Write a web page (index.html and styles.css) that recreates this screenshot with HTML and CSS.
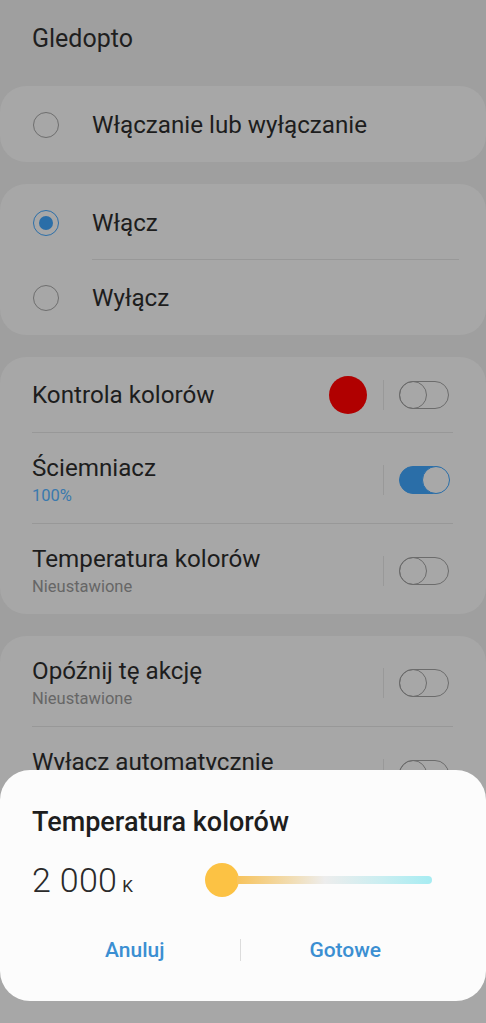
FILE: index.html
```html
<!DOCTYPE html>
<html lang="pl">
<head>
<meta charset="utf-8">
<title>Gledopto</title>
<link rel="stylesheet" href="styles.css">
</head>
<body>
<div class="screen">
  <header class="header">Gledopto</header>

  <section class="card card-single">
    <div class="radio-row">
      <span class="radio"></span>
      <span class="label">Włączanie lub wyłączanie</span>
    </div>
  </section>

  <section class="card card-radios">
    <div class="radio-row">
      <span class="radio radio-on"></span>
      <span class="label">Włącz</span>
    </div>
    <div class="divider divider-indent"></div>
    <div class="radio-row">
      <span class="radio"></span>
      <span class="label">Wyłącz</span>
    </div>
  </section>

  <section class="card card-list">
    <div class="row row-single">
      <div class="texts"><div class="title">Kontrola kolorów</div></div>
      <span class="swatch"></span>
      <span class="sep"></span>
      <span class="toggle"></span>
    </div>
    <div class="divider"></div>
    <div class="row row-double">
      <div class="texts"><div class="title">Ściemniacz</div><div class="sub sub-blue">100%</div></div>
      <span class="sep"></span>
      <span class="toggle toggle-on"></span>
    </div>
    <div class="divider"></div>
    <div class="row row-double">
      <div class="texts"><div class="title">Temperatura kolorów</div><div class="sub">Nieustawione</div></div>
      <span class="sep"></span>
      <span class="toggle"></span>
    </div>
  </section>

  <section class="card card-list card-last">
    <div class="row row-double">
      <div class="texts"><div class="title">Opóźnij tę akcję</div><div class="sub">Nieustawione</div></div>
      <span class="sep"></span>
      <span class="toggle"></span>
    </div>
    <div class="divider"></div>
    <div class="row row-double">
      <div class="texts"><div class="title">Wyłącz automatycznie</div><div class="sub">Nieustawione</div></div>
      <span class="sep"></span>
      <span class="toggle"></span>
    </div>
  </section>

  <div class="dialog">
    <div class="dialog-title">Temperatura kolorów</div>
    <div class="value-row">
      <div class="value"><span class="num">2 000</span><span class="unit">K</span></div>
      <div class="slider">
        <span class="thumb"></span>
        <span class="track"></span>
      </div>
    </div>
    <div class="buttons">
      <button class="btn">Anuluj</button>
      <span class="btn-sep"></span>
      <button class="btn">Gotowe</button>
    </div>
  </div>
</div>
</body>
</html>
```

FILE: styles.css
```css
html, body {
  margin: 0;
  padding: 0;
}
body {
  background: #9f9f9f;
  font-family: Roboto, "Noto Sans", "Liberation Sans", sans-serif;
  color: #1d1d1d;
}
.screen {
  position: relative;
  width: 486px;
  height: 1023px;
  overflow: hidden;
}
.header {
  height: 86px;
  box-sizing: border-box;
  padding: 24px 0 0 32px;
  font-size: 25px;
  line-height: 30px;
  color: #1f1f1f;
}
.card {
  background: #a7a7a7;
  border-radius: 26px;
  margin-bottom: 22px;
}
.card-single {
  height: 76px;
  display: flex;
  flex-direction: column;
  justify-content: center;
}
.card-single .radio-row {
  height: 76px;
  margin-top: 2px;
}
.card-radios {
  padding-top: 3px;
}
.radio-row {
  display: flex;
  align-items: center;
  height: 75px;
  padding-left: 33px;
}
.card-radios .radio-row:first-child {
  height: 72px;
}
.radio {
  width: 26px;
  height: 26px;
  box-sizing: border-box;
  border: 1.5px solid #6e6e6e;
  border-radius: 50%;
  margin-right: 33px;
  flex: none;
  display: flex;
  align-items: center;
  justify-content: center;
}
.radio-on {
  border-color: #2c6fa9;
}
.radio-on::after {
  content: "";
  width: 14px;
  height: 14px;
  border-radius: 50%;
  background: #2a6ea8;
}
.label {
  font-size: 24.2px;
  line-height: 30px;
}
.divider {
  height: 1px;
  background: #989898;
  margin: 0 33px 0 32px;
}
.divider-indent {
  margin: 0 27px 0 92px;
}
.card-list .divider {
  margin: 0 33px 0 32px;
}
.card-last {
  height: 500px;
}
.row {
  display: flex;
  align-items: center;
  padding: 0 37px 0 32px;
  box-sizing: border-box;
}
.row-single {
  height: 75px;
  padding-top: 1px;
}
.row-double {
  height: 90px;
  padding-top: 4px;
}
.texts {
  flex: 1;
}
.title {
  font-size: 24.2px;
  line-height: 30px;
}
.sub {
  font-size: 16.5px;
  line-height: 22px;
  margin-top: 2px;
  color: #666666;
}
.sub-blue {
  color: #3a79ad;
}
.swatch {
  width: 38px;
  height: 38px;
  border-radius: 50%;
  background: #b00000;
  margin-right: 16px;
  flex: none;
}
.sep {
  width: 1px;
  height: 30px;
  background: #999999;
  margin-right: 15px;
  flex: none;
}
.toggle {
  position: relative;
  width: 50px;
  height: 28px;
  box-sizing: border-box;
  border: 1.5px solid #6c6c6c;
  border-radius: 14px;
  flex: none;
}
.toggle::after {
  content: "";
  position: absolute;
  left: -1.5px;
  top: -1.5px;
  width: 28px;
  height: 28px;
  box-sizing: border-box;
  border: 1.5px solid #6c6c6c;
  border-radius: 50%;
}
.toggle-on {
  background: #2a6ea8;
  border-color: #2a6ea8;
}
.toggle-on::after {
  left: auto;
  right: -1.5px;
  border-color: #2a6ea8;
  background: #a8a8a8;
}
.dialog {
  position: absolute;
  left: 0;
  right: 0;
  top: 770px;
  height: 231px;
  box-sizing: border-box;
  background: #fcfcfc;
  border-radius: 30px;
  padding: 37px 33px 0 32px;
}
.dialog-title {
  font-size: 27px;
  line-height: 30px;
  font-weight: 500;
  color: #1e1e1e;
}
.value-row {
  display: flex;
  align-items: center;
  height: 44px;
  margin-top: 21px;
}
.value {
  width: 173px;
  display: flex;
  align-items: baseline;
  color: #2a2a2a;
}
.num {
  font-size: 34px;
  font-weight: 300;
  letter-spacing: 0.3px;
}
.unit {
  font-size: 17px;
  margin-left: 5px;
}
.slider {
  display: flex;
  align-items: center;
  width: 227px;
}
.thumb {
  width: 34px;
  height: 34px;
  border-radius: 50%;
  background: #fcc244;
  flex: none;
}
.track {
  flex: 1;
  height: 8px;
  margin-left: -2px;
  border-radius: 0 4px 4px 0;
  background: linear-gradient(to right, #f7c35c 0%, #f1dfba 30%, #ededed 45%, #c9eef1 75%, #a6ecf2 100%);
}
.buttons {
  display: grid;
  grid-template-columns: 1fr 1px 1fr;
  align-items: center;
  height: 44px;
  margin: 26px 3px 0 -2px;
}
.btn {
  border: 0;
  background: transparent;
  padding: 0;
  font-family: Roboto, "Noto Sans", "Liberation Sans", sans-serif;
  font-size: 21px;
  font-weight: 500;
  color: #3b8fd2;
  text-align: center;
}
.btn-sep {
  width: 1px;
  height: 22px;
  background: #dcdcdc;
}
```
